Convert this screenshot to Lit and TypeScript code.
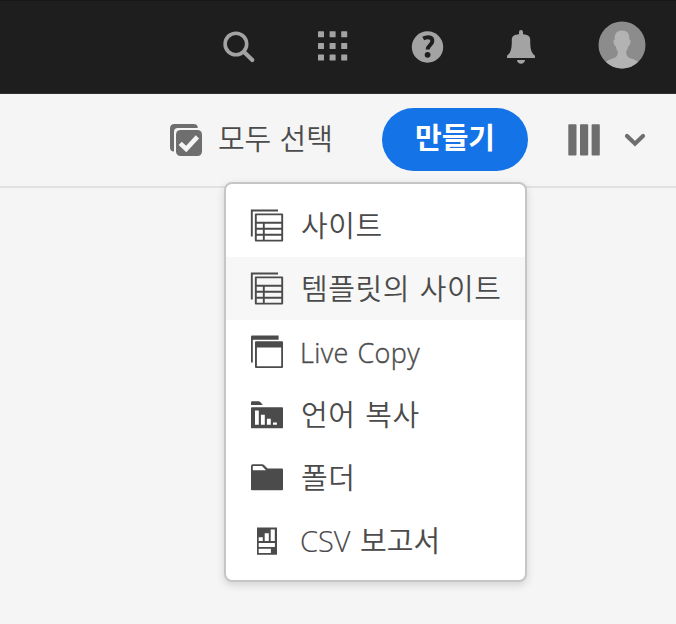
import { LitElement, html, css, svg } from "lit";
import { customElement } from "lit/decorators.js";

const sheets = svg`
  <path d="M28 1.5H1.8V27.5" fill="none" stroke="#4b4b4b" stroke-width="1.9"/>
  <path d="M5.8 5.4H32.2V31.6H5.8ZM5.8 13.8H32.2M5.8 19.8H32.2M5.8 25.7H32.2M13.8 13.8V31.6" fill="none" stroke="#4b4b4b" stroke-width="1.9" stroke-linejoin="round"/>`;

const icons = {
  site: sheets,
  live: svg`
    <path d="M1 27.5V1.7Q1 .5 2.2 .5H28.6V4.7H2.8V27.5Z"/>
    <path d="M5 7.3Q5 6.3 6 6.3H32Q33 6.3 33 7.3V32Q33 33 32 33H6Q5 33 5 32ZM6.9 12.6V31.2H31.2V12.6Z" fill-rule="evenodd"/>`,
  language: svg`
    <path d="M1 7V4.2Q1 3.2 2 3.2H8.5Q9.5 3.2 10.3 4.1L12.8 7Z"/>
    <path d="M1 10.1Q1 9.2 2 9.2H32Q33 9.2 33 10.1V29.4Q33 30.3 32 30.3H2Q1 30.3 1 29.4ZM5 12.5V26.8H8.8V12.5ZM10.9 16.8V26.8H14.8V16.8ZM16.9 20.7V26.8H20.8V20.7ZM23 24.6V26.8H26.9V24.6Z" fill-rule="evenodd"/>`,
  folder: svg`
    <path d="M1 5Q1 3.3 2.7 3.3H12.3Q13.3 3.3 14 4L17.6 7.4H32Q33 7.4 33 8.4V28.3Q33 29.3 32 29.3H2Q1 29.3 1 28.3ZM2.8 5.1V9.3H16L12 5.1Z" fill-rule="evenodd"/>`,
  csv: svg`
    <path d="M7 2.6H27V29.7H7ZM20.7 4.4V16H24.8V4.4ZM14.7 8.3V16H18.8V8.3ZM8.7 12.2V16H12.8V12.2ZM8.7 17.9V21.9H24.9V17.9ZM8.7 23.8V27.9H20.9V23.8Z" fill-rule="evenodd"/>`,
};

const items = [
  { label: "사이트", icon: "site", cls: "" },
  { label: "템플릿의 사이트", icon: "site", cls: "active" },
  { label: "Live Copy", icon: "live", cls: "latin" },
  { label: "언어 복사", icon: "language", cls: "" },
  { label: "폴더", icon: "folder", cls: "" },
  { label: "CSV 보고서", icon: "csv", cls: "mixed" },
];

@customElement("app-root")
export class AppRoot extends LitElement {
  static styles = css`
    :host {
      display: block;
      position: relative;
      width: 676px;
      height: 624px;
      overflow: hidden;
      background: #f5f5f5;
      color: #4b4b4b;
      font-family: "Open Sans", "Noto Sans CJK KR", sans-serif;
      font-weight: 350;
    }
    * { box-sizing: border-box; }
    svg { display: block; flex: none; }
    .bar {
      display: flex;
      align-items: center;
      justify-content: flex-end;
      height: 94px;
      padding: 0 30.5px 0 0;
      background: #1e1e1e;
      border-top: 1px solid #171717;
      border-bottom: 1px solid #303030;
      gap: 60px;
      fill: #a3a3a3;
    }
    .avatar { margin-bottom: 4px; }
    .tools {
      display: flex;
      align-items: center;
      height: 94px;
      padding: 0 30px 0 169px;
      border-bottom: 2px solid #e1e1e1;
      fill: #6e6e6e;
    }
    .all {
      width: 164px;
      margin-left: 15px;
      font-size: 29px;
      line-height: 40px;
      letter-spacing: -0.1px;
      word-spacing: 1px;
      white-space: nowrap;
      padding-bottom: 2px;
    }
    .create {
      width: 146px;
      height: 63px;
      margin: 0 40px 1px 0;
      border: 0;
      border-radius: 32px;
      padding: 0 0 8px;
      background: #1473e6;
      color: #fff;
      font: 700 29px/40px "Noto Sans CJK KR", sans-serif;
    }
    .chev { margin-left: 24px; }
    .menu {
      position: absolute;
      left: 224px;
      top: 182px;
      width: 303px;
      height: 400px;
      padding-top: 10px;
      background: #fff;
      border: 2px solid #c6c6c6;
      border-radius: 8px;
      box-shadow: 0 3px 9px rgba(0, 0, 0, 0.14);
    }
    .item {
      display: flex;
      align-items: center;
      height: 63.2px;
      padding-left: 24px;
      gap: 17px;
      font-size: 29px;
      line-height: 40px;
      letter-spacing: 0.6px;
      word-spacing: 1.5px;
      white-space: nowrap;
      fill: #4b4b4b;
    }
    .active { background: #f7f7f7; }
    .latin {
      gap: 16px;
      font-size: 27px;
      letter-spacing: 0.35px;
      -webkit-text-stroke: 0.4px #4b4b4b;
    }
    .latin span { padding-top: 2px; }
    .mixed { gap: 16px; letter-spacing: 0; word-spacing: 2px; }
    .mixed span { padding-bottom: 1px; -webkit-text-stroke: 0.15px #4b4b4b; }
  `;

  render() {
    return html`
      <header class="bar">
        <svg width="34" height="34" viewBox="0 0 34 34">
          <circle cx="13.9" cy="14" r="10.8" fill="none" stroke="#a3a3a3" stroke-width="3.6"/>
          <path d="M22 22L30.3 30" stroke="#a3a3a3" stroke-width="4.2" stroke-linecap="round"/>
        </svg>
        <svg width="34" height="34" viewBox="0 0 34 34">
          ${[1.3, 12.9, 24.5].map((y) => [2, 13.6, 25.2].map((x) => svg`<rect x=${x} y=${y} width="6" height="6" rx=".5"/>`))}
        </svg>
        <svg width="34" height="34" viewBox="0 0 34 34">
          <circle cx="17.5" cy="17" r="15.7"/>
          <path d="M13.2 8.6C18 6 22.6 7.4 22.3 11.2C22.1 15.2 17.7 15.2 17.7 19.6" fill="none" stroke="#1e1e1e" stroke-width="4"/>
          <circle cx="17.6" cy="24.8" r="2.9" fill="#1e1e1e"/>
        </svg>
        <svg width="34" height="36" viewBox="0 0 34 36">
          <path d="M15 5.2V3Q15 1 17 1T19 3V5.2C23.8 5.4 26.2 7.2 26.2 10.8C26.2 19.3 26.8 23.6 31 26.8V29H3V26.8C7.2 23.6 7.8 19.3 7.8 10.8C7.8 7.2 10.2 5.4 15 5.2Z"/>
          <path d="M13 31H21Q20.4 34.8 17 34.8T13 31Z"/>
        </svg>
        <svg class="avatar" width="48" height="48" viewBox="0 0 48 48">
          <clipPath id="face"><circle cx="24" cy="24" r="23.5"/></clipPath>
          <circle cx="24" cy="24" r="23.5" fill="#8c8c8c"/>
          <path clip-path="url(#face)" fill="#b3b3b3" d="M24 9.6C29 9.6 31.7 12.8 31.3 18.5Q33.6 19 31.8 23.5Q31.4 25.2 30.2 25.4Q29.7 28.5 28.2 30.3Q27.7 36.2 33 37.4Q38.5 38.7 41 42V48H7V42Q9.5 38.7 15 37.4Q20.3 36.2 19.8 30.3Q18.3 28.5 17.8 25.4Q16.6 25.2 16.2 23.5Q14.4 19 16.7 18.5C16.3 12.8 19 9.6 24 9.6Z"/>
        </svg>
      </header>
      <div class="tools">
        <svg width="34" height="34" viewBox="0 0 34 34">
          <path d="M1 5.5Q1 1 5.5 1H24.5Q28.8 1 28.8 5.1H8.8Q5 5.1 5 9V28.5Q1 28.5 1 24.5Z"/>
          <rect x="7" y="7" width="26" height="26" rx="4.5"/>
          <path d="M11.2 20.3L17.2 26L28.4 13.9" fill="none" stroke="#f5f5f5" stroke-width="4.5"/>
        </svg>
        <span class="all">모두 선택</span>
        <button class="create">만들기</button>
        <svg width="32" height="34" viewBox="0 0 32 34">
          <rect x=".3" y="1.2" width="8.2" height="31.4" rx=".8"/>
          <rect x="12" y="1.2" width="8.2" height="31.4" rx=".8"/>
          <rect x="23.6" y="1.2" width="8.2" height="31.4" rx=".8"/>
        </svg>
        <svg class="chev" width="22" height="14" viewBox="0 0 22 14">
          <path d="M3 3L11 10.7L19 3" fill="none" stroke="#6e6e6e" stroke-width="4.2" stroke-linecap="round"/>
        </svg>
      </div>
      <nav class="menu">
        ${items.map((i) => html`
          <div class="item ${i.cls}">
            <svg width="34" height="34" viewBox="0 0 34 34">${icons[i.icon as keyof typeof icons]}</svg>
            <span>${i.label}</span>
          </div>`)}
      </nav>
    `;
  }
}
